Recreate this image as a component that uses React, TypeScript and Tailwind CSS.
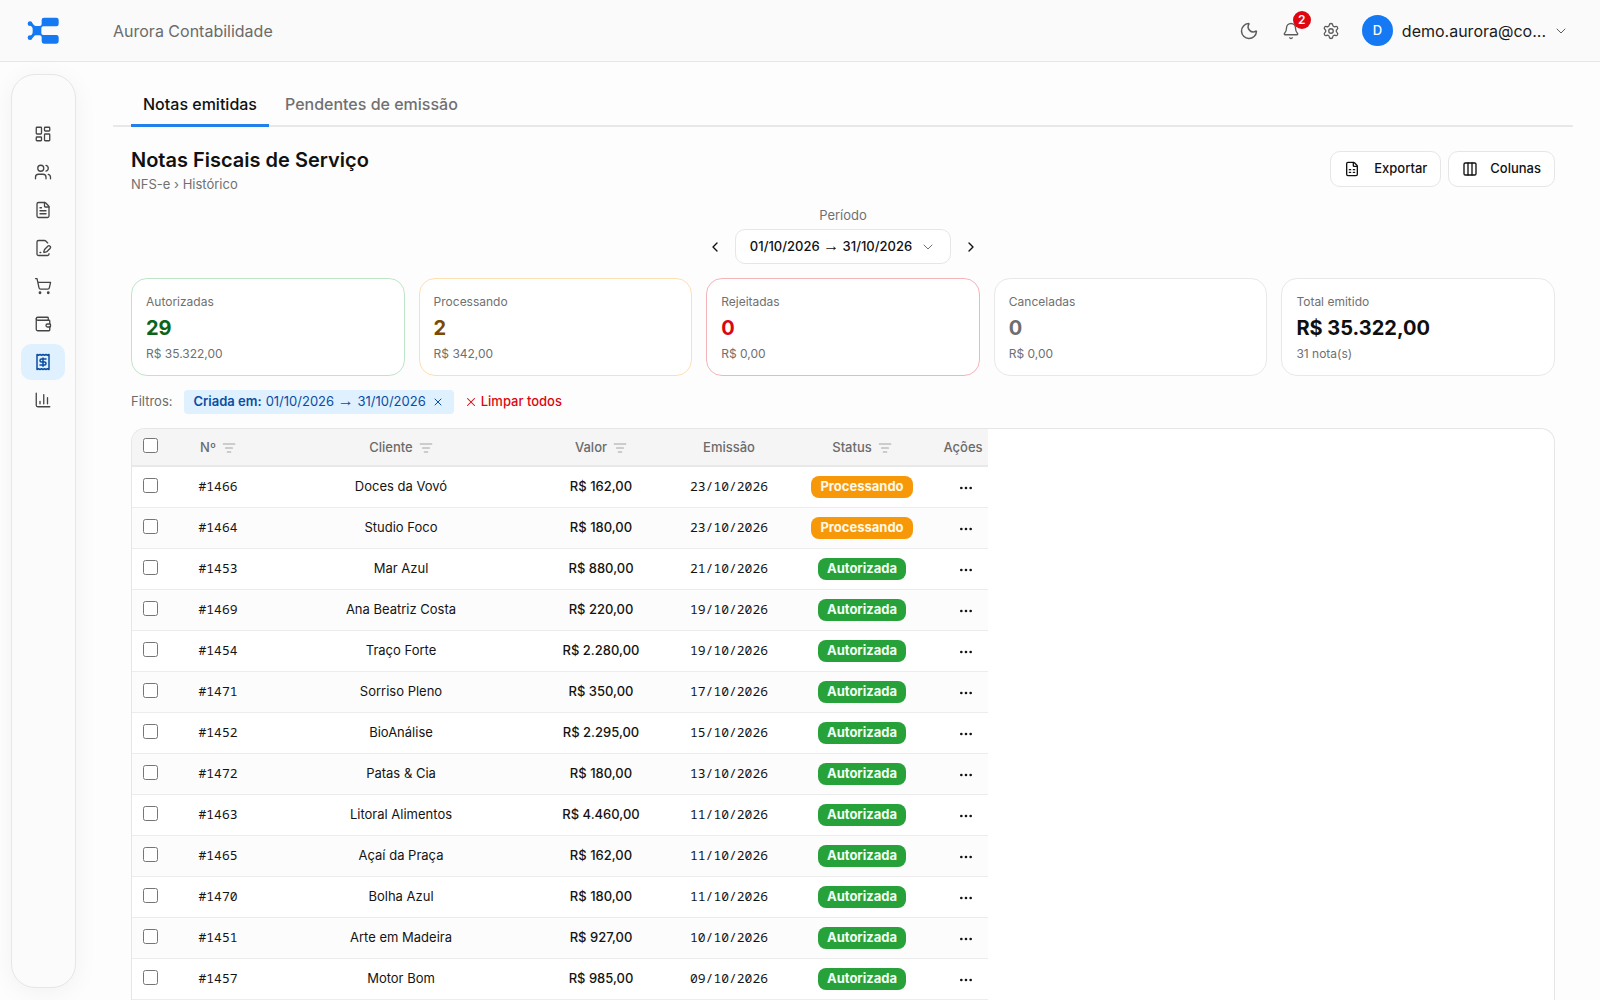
import React from "react";
import {
  Bell,
  ChartColumn,
  ChevronDown,
  ChevronLeft,
  ChevronRight,
  Columns3,
  Ellipsis,
  FilePenLine,
  FileSpreadsheet,
  FileText,
  LayoutDashboard,
  ListFilter,
  Moon,
  Receipt,
  Settings,
  ShoppingCart,
  Users,
  Wallet,
  X,
} from "lucide-react";

const navItems = [
  { label: "Painel", icon: LayoutDashboard },
  { label: "Clientes", icon: Users },
  { label: "Documentos", icon: FileText },
  { label: "Contratos", icon: FilePenLine },
  { label: "Vendas", icon: ShoppingCart },
  { label: "Financeiro", icon: Wallet },
  { label: "Notas fiscais", icon: Receipt, active: true },
  { label: "Relatórios", icon: ChartColumn },
];

const cards = [
  { label: "Autorizadas", value: "29", note: "R$ 35.322,00", border: "border-[#bfe5c8]", color: "text-[#0b6417]" },
  { label: "Processando", value: "2", note: "R$ 342,00", border: "border-[#fde0b2]", color: "text-[#7c4a03]" },
  { label: "Rejeitadas", value: "0", note: "R$ 0,00", border: "border-[#f5b3ba]", color: "text-[#dc0611]" },
  { label: "Canceladas", value: "0", note: "R$ 0,00", border: "border-[#e8e8e8]", color: "text-[#6e6e6e]" },
  { label: "Total emitido", value: "R$ 35.322,00", note: "31 nota(s)", border: "border-[#e8e8e8]", color: "text-[#0f0f0f]" },
];

const rows = [
  ["1466", "Doces da Vovó", "162,00", "23/10/2026", "Processando"],
  ["1464", "Studio Foco", "180,00", "23/10/2026", "Processando"],
  ["1453", "Mar Azul", "880,00", "21/10/2026", "Autorizada"],
  ["1469", "Ana Beatriz Costa", "220,00", "19/10/2026", "Autorizada"],
  ["1454", "Traço Forte", "2.280,00", "19/10/2026", "Autorizada"],
  ["1471", "Sorriso Pleno", "350,00", "17/10/2026", "Autorizada"],
  ["1452", "BioAnálise", "2.295,00", "15/10/2026", "Autorizada"],
  ["1472", "Patas & Cia", "180,00", "13/10/2026", "Autorizada"],
  ["1463", "Litoral Alimentos", "4.460,00", "11/10/2026", "Autorizada"],
  ["1465", "Açaí da Praça", "162,00", "11/10/2026", "Autorizada"],
  ["1470", "Bolha Azul", "180,00", "11/10/2026", "Autorizada"],
  ["1451", "Arte em Madeira", "927,00", "10/10/2026", "Autorizada"],
  ["1457", "Motor Bom", "985,00", "09/10/2026", "Autorizada"],
];

function Logo() {
  return (
    <svg width="32" height="28" viewBox="0 0 96 84" fill="#1479f2" aria-label="Aurora" role="img">
      <path d="M51 2h37q7 0 7 7v12q0 7-7 7H49q-6 0-6 5v16q0 5 6 5h39q7 0 7 7v12q0 7-7 7H51q-7 0-7-7v-12q0-6-6-6H27q-4 0-7 4l-7 8-7-6 8-8q3-3 3-7v-10q0-4-3-7l-8-8 7-6 7 8q3 4 7 4h11q6 0 6-6V9q0-7 7-7z" />
      <circle cx="9" cy="20" r="7" />
      <circle cx="9" cy="62" r="7" />
    </svg>
  );
}

function Header() {
  return (
    <header className="flex h-[62px] shrink-0 items-center justify-between border-b border-[#e6e6e6] bg-[#fafafa] pr-[31px] pl-[27px]">
      <div className="flex items-center">
        <Logo />
        <span className="ml-[54px] text-base text-[#6b6b6b]">Aurora Contabilidade</span>
      </div>
      <div className="flex items-center text-[#5c5c5c]">
        <button type="button" aria-label="Tema escuro">
          <Moon size={20} strokeWidth={1.75} />
        </button>
        <button type="button" aria-label="Notificações" className="relative ml-[23px]">
          <Bell size={18} strokeWidth={1.75} />
          <span className="absolute -top-[11px] left-[11px] flex size-[18px] items-center justify-center rounded-full bg-[#e00610] text-xs font-semibold text-white">
            2
          </span>
        </button>
        <button type="button" aria-label="Configurações" className="ml-[22px]">
          <Settings size={18} strokeWidth={1.75} />
        </button>
        <button type="button" className="ml-[22px] flex items-center">
          <span className="flex size-[31px] items-center justify-center rounded-full bg-[#1479f2] text-[13px] font-medium text-white">
            D
          </span>
          <span className="ml-[9px] text-base text-[#1a1a1a]">demo.aurora@co...</span>
          <ChevronDown size={16} strokeWidth={1.5} className="ml-[7px]" />
        </button>
      </div>
    </header>
  );
}

function Sidebar() {
  return (
    <nav
      aria-label="Principal"
      className="my-3 ml-[11px] w-[65px] shrink-0 rounded-3xl border border-[#e6e6e6] bg-[#fbfbfb] pt-[41px] pr-2.5 pl-[9px] shadow-[0_4px_24px_rgba(0,0,0,0.05)]"
    >
      <ul className="flex flex-col gap-0.5">
        {navItems.map(({ label, icon: Icon, active }) => (
          <li key={label}>
            <a
              href="#"
              aria-label={label}
              className={
                active
                  ? "flex h-9 items-center justify-center rounded-[10px] bg-[#dff0ff] text-[#0a4da2]"
                  : "flex h-9 items-center justify-center rounded-[10px] text-[#454545]"
              }
            >
              <Icon size={18} strokeWidth={active ? 2 : 1.75} />
            </a>
          </li>
        ))}
      </ul>
    </nav>
  );
}

function Period() {
  return (
    <span>
      01/10/2026 <span className="font-['Liberation_Sans',sans-serif] text-base leading-none font-normal">→</span> 31/10/2026
    </span>
  );
}

function HeadCell({ label, filter }: { label: string; filter?: boolean }) {
  return (
    <th scope="col" className="border-b-2 border-[#e8e8e8] px-0 pt-0.5 pb-0 font-medium">
      <span className="flex items-center justify-center gap-1.5">
        {label}
        {filter && (
          <button type="button" aria-label={`Filtrar ${label}`} className="text-[#a3a3a3]">
            <ListFilter size={14} strokeWidth={1.75} />
          </button>
        )}
      </span>
    </th>
  );
}

function Check({ label }: { label: string }) {
  return <input type="checkbox" aria-label={label} className="mr-px mb-1 size-[15px] align-middle" />;
}

function InvoiceTable() {
  return (
    <div className="mt-3.5 overflow-hidden rounded-t-[14px] border border-b-0 border-[#e6e6e6] bg-white">
      <table className="w-[856px] table-fixed border-separate border-spacing-0 text-center text-[13px] text-[#141414]">
        <colgroup>
          <col className="w-[38px]" />
          <col className="w-[96px]" />
          <col className="w-[270px]" />
          <col className="w-[130px]" />
          <col className="w-[126px]" />
          <col className="w-[140px]" />
          <col className="w-[56px]" />
        </colgroup>
        <thead>
          <tr className="h-[38px] bg-[#f5f5f5] text-[#6b6b6b]">
            <th scope="col" className="border-b-2 border-[#e8e8e8] p-0">
              <Check label="Selecionar todas" />
            </th>
            <HeadCell label="Nº" filter />
            <HeadCell label="Cliente" filter />
            <HeadCell label="Valor" filter />
            <HeadCell label="Emissão" />
            <HeadCell label="Status" filter />
            <th scope="col" className="border-b-2 border-[#e8e8e8] pt-0.5 pr-1 pb-0 pl-2.5 font-medium">
              Ações
            </th>
          </tr>
        </thead>
        <tbody>
          {rows.map(([number, client, amount, date, status]) => (
            <tr key={number} className="h-[41px] even:bg-[#fcfcfc] [&>td]:border-b [&>td]:border-[#ececec] [&>td]:p-0">
              <td>
                <Check label={`Selecionar nota ${number}`} />
              </td>
              <td className="font-['Noto_Sans_Mono','DejaVu_Sans_Mono',monospace]">#{number}</td>
              <td>{client}</td>
              <td className="font-medium">R$ {amount}</td>
              <td className="font-['Noto_Sans_Mono','DejaVu_Sans_Mono',monospace]">{date}</td>
              <td>
                <span
                  className={
                    status === "Processando"
                      ? "inline-flex h-[22px] items-center rounded-lg bg-[#f79809] px-[9px] font-bold text-[#fff8e6]"
                      : "inline-flex h-[22px] items-center rounded-lg bg-[#27a23a] px-[9px] font-bold text-[#f1fff3]"
                  }
                >
                  {status}
                </span>
              </td>
              <td>
                <button type="button" aria-label={`Ações da nota ${number}`} className="ml-3 align-middle">
                  <Ellipsis size={16} />
                </button>
              </td>
            </tr>
          ))}
        </tbody>
      </table>
    </div>
  );
}

export default function App() {
  return (
    <div className="flex h-screen flex-col overflow-hidden bg-[#fdfdfd] font-['Inter','Noto_Sans',sans-serif] text-[#111111]">
      <Header />
      <div className="flex min-h-0 flex-1">
        <Sidebar />
        <main className="min-w-0 flex-1 overflow-hidden pr-[27px] pl-[37px]">
          <div role="tablist" className="mt-[22px] flex h-[43px] border-b-2 border-[#e8e8e8] px-[18px]">
            <button
              type="button"
              role="tab"
              aria-selected="true"
              className="-mb-0.5 border-b-[3px] border-[#2280ea] px-3 text-base font-medium"
            >
              Notas emitidas
            </button>
            <button
              type="button"
              role="tab"
              aria-selected="false"
              className="-mb-0.5 border-b-[3px] border-transparent px-4 text-base font-medium text-[#707070]"
            >
              Pendentes de emissão
            </button>
          </div>
          <div className="px-[18px]">
            <div className="flex items-start justify-between pt-[17px]">
              <div>
                <h1 className="text-xl leading-8 font-semibold">Notas Fiscais de Serviço</h1>
                <p className="text-[13px] leading-4 text-[#707070]">NFS-e › Histórico</p>
              </div>
              <div className="mt-[7px] flex gap-[7px] text-[13px] font-medium">
                <button type="button" className="flex h-9 items-center gap-3.5 rounded-[10px] border border-[#e6e6e6] bg-white px-[13px]">
                  <FileSpreadsheet size={16} />
                  Exportar
                </button>
                <button type="button" className="flex h-9 items-center gap-3 rounded-[10px] border border-[#e6e6e6] bg-white px-[13px]">
                  <Columns3 size={16} />
                  Colunas
                </button>
              </div>
            </div>

            <div className="mt-[13px] flex flex-col items-center">
              <span className="text-[13px] leading-5 text-[#707070]">Período</span>
              <div className="mt-1 flex items-center gap-3">
                <button type="button" aria-label="Período anterior">
                  <ChevronLeft size={16} />
                </button>
                <button
                  type="button"
                  className="flex h-[35px] items-center gap-2 rounded-[10px] border border-[#e6e6e6] bg-white px-3.5 text-[13px] font-medium"
                >
                  <Period />
                  <ChevronDown size={16} strokeWidth={1.5} className="text-[#707070]" />
                </button>
                <button type="button" aria-label="Próximo período">
                  <ChevronRight size={16} />
                </button>
              </div>
            </div>

            <div className="mt-3.5 grid grid-cols-5 gap-3.5">
              {cards.map((card) => (
                <section key={card.label} className={`flex flex-col rounded-2xl border bg-white px-3.5 pt-3.5 pb-[13px] ${card.border}`}>
                  <h2 className="text-xs leading-[18px] text-[#707070]">{card.label}</h2>
                  <p className={`text-xl leading-[35px] font-bold ${card.color}`}>{card.value}</p>
                  <p className="text-xs leading-4 text-[#707070]">{card.note}</p>
                </section>
              ))}
            </div>

            <div className="mt-3.5 flex h-6 items-center text-[13px]">
              <span className="text-[#6b6b6b]">Filtros:</span>
              <span className="ml-[11px] flex h-6 items-center rounded bg-[#dff0ff] px-2.5 text-[#0a4da2]">
                <span className="mr-1 font-semibold">Criada em:</span>
                <Period />
                <button type="button" aria-label="Remover filtro" className="ml-1.5">
                  <X size={12} />
                </button>
              </span>
              <button type="button" className="ml-2.5 flex items-center gap-[3px] font-medium text-[#dc0611]">
                <X size={14} strokeWidth={1.75} />
                Limpar todos
              </button>
            </div>

            <InvoiceTable />
          </div>
        </main>
      </div>
    </div>
  );
}
